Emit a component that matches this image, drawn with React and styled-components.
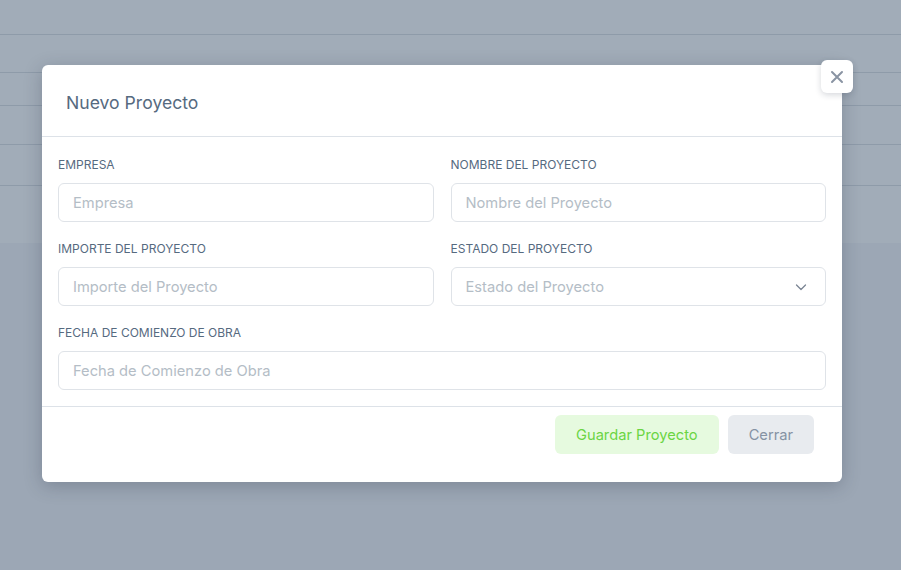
import React from "react";
import styled, { createGlobalStyle } from "styled-components";

const Global = createGlobalStyle`
  html, body { margin: 0; padding: 0; }
  body { font-family: Inter, "Noto Sans", sans-serif; background: #f5f5f9; }
  * { box-sizing: border-box; }
`;

const Page = styled.div`
  position: relative;
  width: 901px;
  height: 570px;
  overflow: hidden;
  background: #f5f5f9;
`;

const Table = styled.div`
  display: flex;
  flex-direction: column;
  height: 243px;
  background: #ffffff;
`;

const TableRow = styled.div`
  height: ${(p) => p.$h}px;
  border-bottom: 1px solid #d9dce1;
`;

const Overlay = styled.div`
  position: absolute;
  inset: 0;
  background: rgba(67, 89, 113, 0.5);
  display: flex;
  justify-content: flex-start;
  align-items: flex-start;
  padding: 65px 0 0 42px;
`;

const Modal = styled.div`
  position: relative;
  width: 800px;
  background: #ffffff;
  border-radius: 6px;
  box-shadow: 0 4px 18px rgba(30, 41, 59, 0.25);
`;

const CloseButton = styled.button`
  position: absolute;
  top: -5px;
  right: -11px;
  width: 32px;
  height: 33px;
  border: none;
  border-radius: 6px;
  background: #ffffff;
  box-shadow: 0 2px 6px rgba(30, 41, 59, 0.18);
  display: flex;
  align-items: center;
  justify-content: center;
  padding: 0;
  color: #8a94a3;
`;

const Header = styled.div`
  height: 72px;
  padding: 4px 24px 0;
  display: flex;
  align-items: center;
  border-bottom: 1px solid #dde2e8;
`;

const Title = styled.h5`
  margin: 0;
  font-size: 17.6px;
  font-weight: 400;
  color: #566a7f;
`;

const Body = styled.div`
  padding: 21px 16px 16px;
  display: grid;
  grid-template-columns: 1fr 1fr;
  column-gap: 17px;
  row-gap: 20px;
`;

const Field = styled.div`
  display: flex;
  flex-direction: column;
  gap: 11px;
  grid-column: ${(p) => (p.$full ? "1 / -1" : "auto")};
`;

const Label = styled.label`
  font-size: 12px;
  font-weight: 400;
  color: #566a7f;
  line-height: 14px;
  text-transform: uppercase;
`;

const InputBox = styled.div`
  position: relative;
  height: 39px;
  border: 1px solid #dfe3e8;
  border-radius: 6px;
  display: flex;
  align-items: center;
  padding: 0 14px;
  font-size: 14.7px;
  color: #b4bdc6;
`;

const Chevron = styled.svg`
  position: absolute;
  right: 18px;
  top: 50%;
  margin-top: -3px;
`;

const Footer = styled.div`
  border-top: 1px solid #dde2e8;
  padding: 8px 28px 28px;
  display: flex;
  justify-content: flex-end;
  gap: 9px;
`;

const Button = styled.button`
  height: 39px;
  padding: 0 ${(p) => p.$px}px;
  border: none;
  border-radius: 6px;
  font-family: inherit;
  font-size: 14.7px;
  background: ${(p) => (p.$variant === "success" ? "#e6fadf" : "#e8ebef")};
  color: ${(p) => (p.$variant === "success" ? "#6bd544" : "#8592a3")};
`;

const fields = [
  { label: "Empresa", ph: "Empresa" },
  { label: "Nombre del Proyecto", ph: "Nombre del Proyecto" },
  { label: "Importe del Proyecto", ph: "Importe del Proyecto" },
  { label: "Estado del Proyecto", ph: "Estado del Proyecto", select: true },
  { label: "Fecha de Comienzo de Obra", ph: "Fecha de Comienzo de Obra", full: true },
];

export default function App() {
  return (
    <>
      <Global />
      <Page>
        <Table>
          <TableRow $h={35} />
          <TableRow $h={38} />
          <TableRow $h={33} />
          <TableRow $h={39} />
          <TableRow $h={41} />
        </Table>
        <Overlay>
          <Modal>
            <CloseButton aria-label="close">
              <svg width="14" height="14" viewBox="0 0 14 14">
                <path d="M2 2 L12 12 M12 2 L2 12" stroke="currentColor" strokeWidth="2" strokeLinecap="round" />
              </svg>
            </CloseButton>
            <Header>
              <Title>Nuevo Proyecto</Title>
            </Header>
            <Body>
              {fields.map((f) => (
                <Field key={f.label} $full={f.full}>
                  <Label>{f.label}</Label>
                  <InputBox>
                    {f.ph}
                    {f.select && (
                      <Chevron width="12" height="7" viewBox="0 0 12 7">
                        <path d="M1.5 1 L6 5.5 L10.5 1" fill="none" stroke="#7b8594" strokeWidth="1.3" strokeLinecap="round" strokeLinejoin="round" />
                      </Chevron>
                    )}
                  </InputBox>
                </Field>
              ))}
            </Body>
            <Footer>
              <Button $variant="success" $px={21}>Guardar Proyecto</Button>
              <Button $px={21}>Cerrar</Button>
            </Footer>
          </Modal>
        </Overlay>
      </Page>
    </>
  );
}
